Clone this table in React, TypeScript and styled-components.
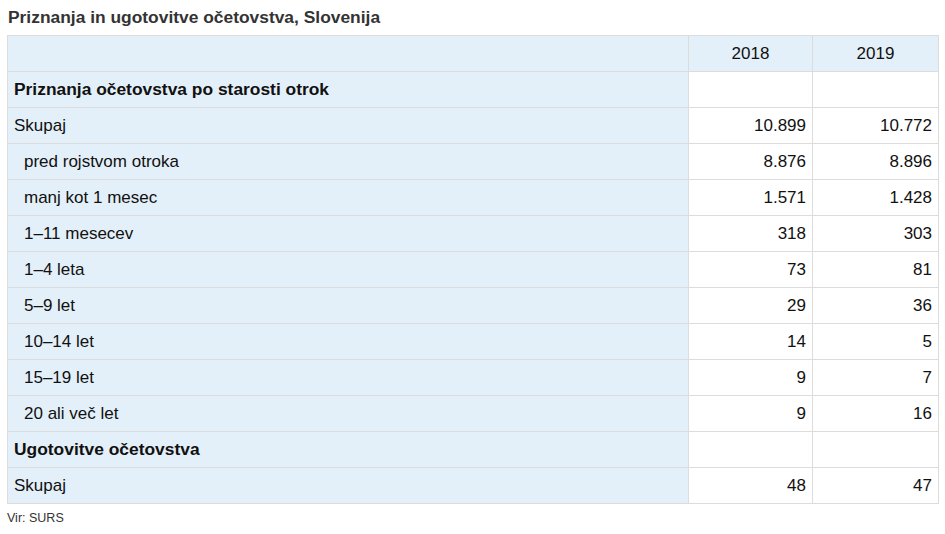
import React from "react";
import styled, { createGlobalStyle } from "styled-components";

const GlobalStyle = createGlobalStyle`
    body {
        margin: 0;
        background: #fff;
        font-family: "Liberation Sans", Arial, sans-serif;
    }
`

const Wrapper = styled.div`
    padding: 0 7px;
    width: 945px;
    box-sizing: border-box;
`

const Title = styled.h3`
    margin: 0;
    height: 35px;
    line-height: 35px;
    padding-left: 1px;
    font-size: 17.4px;
    font-weight: bold;
    color: #333;
`

const Table = styled.table`
    border-collapse: collapse;
    table-layout: fixed;
    width: 931px;
    font-size: 17px;
    color: #111;
`

const Row = styled.tr`
    height: 36px;
`

const LabelCell = styled.td<{ $indent?: boolean; $bold?: boolean }>`
    background: #e4f0f9;
    border: 1px solid #dcdcdc;
    padding: 0 6px 0 ${p => (p.$indent ? "16px" : "6px")};
    font-weight: ${p => (p.$bold ? "bold" : "normal")};
    font-size: ${p => (p.$bold ? "17.4px" : "17px")};
    white-space: nowrap;
`

const HeadCell = styled.th`
    background: #e4f0f9;
    border: 1px solid #dcdcdc;
    font-weight: normal;
    text-align: center;
    padding: 0;
`

const NumCell = styled.td`
    border: 1px solid #dcdcdc;
    text-align: right;
    padding: 0 6px;
    background: #fff;
`

const Source = styled.div`
    font-size: 12.5px;
    color: #333;
    padding-top: 7px;
`

type Line = {
    label: string;
    a?: string;
    b?: string;
    indent?: boolean;
    bold?: boolean;
}

const rows: Line[] = [
    { label: "Priznanja očetovstva po starosti otrok", bold: true },
    { label: "Skupaj", a: "10.899", b: "10.772" },
    { label: "pred rojstvom otroka", a: "8.876", b: "8.896", indent: true },
    { label: "manj kot 1 mesec", a: "1.571", b: "1.428", indent: true },
    { label: "1–11 mesecev", a: "318", b: "303", indent: true },
    { label: "1–4 leta", a: "73", b: "81", indent: true },
    { label: "5–9 let", a: "29", b: "36", indent: true },
    { label: "10–14 let", a: "14", b: "5", indent: true },
    { label: "15–19 let", a: "9", b: "7", indent: true },
    { label: "20 ali več let", a: "9", b: "16", indent: true },
    { label: "Ugotovitve očetovstva", bold: true },
    { label: "Skupaj", a: "48", b: "47" },
];

const App: React.FC = () => {
    return (
        <Wrapper>
            <GlobalStyle />
            <Title>Priznanja in ugotovitve očetovstva, Slovenija</Title>
            <Table>
                <colgroup>
                    <col style={{ width: 681 }} />
                    <col style={{ width: 124 }} />
                    <col style={{ width: 126 }} />
                </colgroup>
                <thead>
                    <Row>
                        <HeadCell />
                        <HeadCell>2018</HeadCell>
                        <HeadCell>2019</HeadCell>
                    </Row>
                </thead>
                <tbody>
                    {rows.map((r, i) => (
                        <Row key={i}>
                            <LabelCell $indent={r.indent} $bold={r.bold}>{r.label}</LabelCell>
                            <NumCell>{r.a}</NumCell>
                            <NumCell>{r.b}</NumCell>
                        </Row>
                    ))}
                </tbody>
            </Table>
            <Source>Vir: SURS</Source>
        </Wrapper>
    )
}

export default App;
